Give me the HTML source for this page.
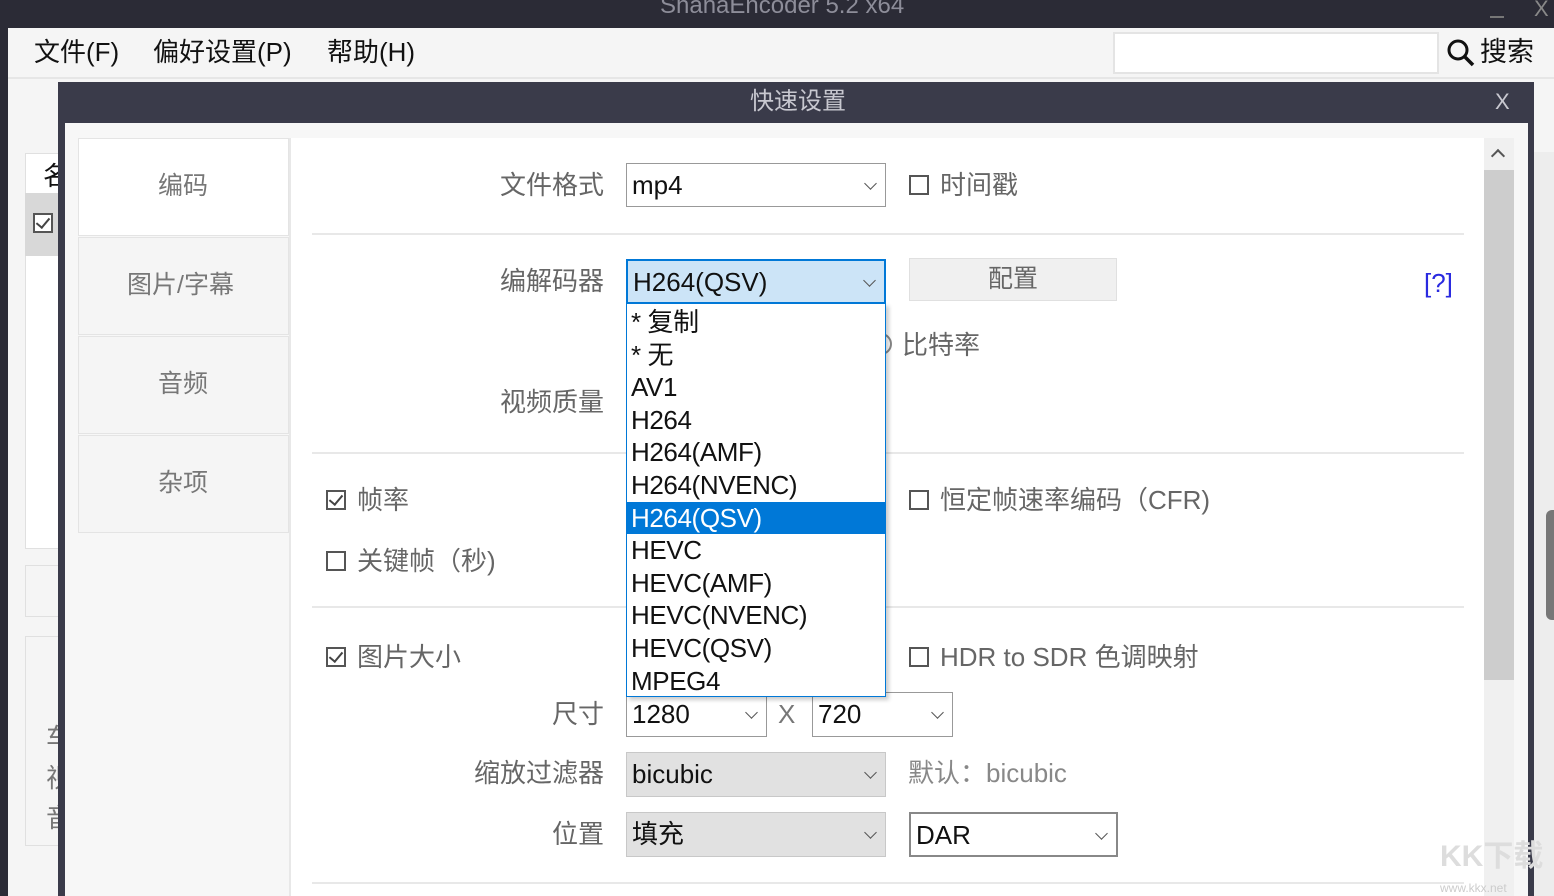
<!DOCTYPE html>
<html><head><meta charset="utf-8"><style>
*{margin:0;padding:0;box-sizing:border-box}
body{width:1554px;height:896px;overflow:hidden;position:relative;background:#2b2b36;font-family:"Liberation Sans","Noto Sans CJK SC",sans-serif}
.a{position:absolute}
.t{position:absolute;white-space:nowrap;line-height:1;font-size:26px}
.lbl{color:#666;text-align:right}
.cb{position:absolute;width:20px;height:20px;border:2px solid #555;background:#fff}
.cb.on::after{content:"";position:absolute;left:4px;top:0px;width:6px;height:11px;border:solid #444;border-width:0 2px 2px 0;transform:rotate(40deg)}
.combo{position:absolute;border:1px solid #999;background:#fff;font-size:26px;color:#111;padding-left:5px;line-height:42px}
.combo.g{background:#e1e1e1;border-color:#c8c8c8}
.chev{position:absolute;right:10px;top:15px;width:9px;height:9px;border:solid #555;border-width:0 1.5px 1.5px 0;transform:rotate(45deg)}
.sep{position:absolute;left:312px;width:1152px;height:2px;background:#e8e8e8}
.it{height:32.6px;line-height:32.6px;padding-left:4px;font-size:26px;color:#111;letter-spacing:-0.4px}
</style></head><body>
<div class="t" style="left:660px;top:-6px;color:#8d8d99;font-size:24px">ShanaEncoder 5.2 x64</div>
<div class="a" style="left:1490px;top:16px;width:14px;height:2px;background:#777"></div>
<div class="t" style="left:1534px;top:-2px;color:#888;font-size:22px">X</div>
<div class="a" style="left:8px;top:28px;width:1546px;height:868px;background:#f5f5f5"></div>
<div class="a" style="left:8px;top:77px;width:1546px;height:2px;background:#e6e6e6"></div>
<div class="t" style="left:34px;top:39px;color:#111">文件(F)</div>
<div class="t" style="left:153px;top:39px;color:#111">偏好设置(P)</div>
<div class="t" style="left:327px;top:39px;color:#111">帮助(H)</div>
<div class="a" style="left:1113px;top:32px;width:326px;height:42px;background:#fff;border:2px solid #e4e4e4"></div>
<svg class="a" style="left:1446px;top:38px" width="30" height="30"><circle cx="12" cy="12" r="9" fill="none" stroke="#111" stroke-width="3"/><line x1="19" y1="19" x2="27" y2="27" stroke="#111" stroke-width="3.5"/></svg>
<div class="t" style="left:1480px;top:39px;color:#111;font-size:27px">搜索</div>
<div class="a" style="left:25px;top:153px;width:40px;height:396px;background:#fff;border:1px solid #e0e0e0"></div>
<div class="a" style="left:25px;top:193px;width:40px;height:63px;background:#d8d8d8"></div>
<div class="t" style="left:43px;top:163px;color:#111">名</div>
<div class="cb on" style="left:33px;top:213px;background:#fff"></div>
<div class="a" style="left:25px;top:565px;width:40px;height:52px;border:1px solid #e0e0e0"></div>
<div class="a" style="left:25px;top:636px;width:40px;height:210px;border:1px solid #e0e0e0"></div>
<div class="t" style="left:46px;top:718px;color:#777;line-height:40px">车<br>视<br>音</div>
<div class="a" style="left:1534px;top:152px;width:20px;height:744px;background:#ededed"></div>
<div class="a" style="left:1546px;top:510px;width:10px;height:110px;background:#777;border-radius:6px 0 0 6px"></div>
<div class="a" style="left:58px;top:82px;width:1476px;height:814px;background:#3a3b4a"></div>
<div class="t" style="left:750px;top:90px;color:#c8c8d0;font-size:24px">快速设置</div>
<div class="t" style="left:1495px;top:91px;color:#c8c8d0;font-size:22px">X</div>
<div class="a" style="left:65px;top:123px;width:1463px;height:773px;background:#f7f7f7"></div>
<div class="a" style="left:78px;top:138px;width:211px;height:98px;background:#fff;border:1px solid #e4e4e4"></div>
<div class="a" style="left:78px;top:237px;width:211px;height:98px;background:#f5f5f5;border:1px solid #e4e4e4"></div>
<div class="a" style="left:78px;top:336px;width:211px;height:98px;background:#f5f5f5;border:1px solid #e4e4e4"></div>
<div class="a" style="left:78px;top:435px;width:211px;height:98px;background:#f5f5f5;border:1px solid #e4e4e4"></div>
<div class="t" style="left:158px;top:174px;color:#777;font-size:25px">编码</div>
<div class="t" style="left:127px;top:273px;color:#777;font-size:25px">图片/字幕</div>
<div class="t" style="left:158px;top:372px;color:#777;font-size:25px">音频</div>
<div class="t" style="left:158px;top:471px;color:#777;font-size:25px">杂项</div>
<div class="a" style="left:289px;top:138px;width:2px;height:758px;background:#e8e8e8"></div>
<div class="a" style="left:291px;top:138px;width:1193px;height:758px;background:#fff"></div>
<div class="a" style="left:1484px;top:138px;width:30px;height:758px;background:#f0f0f0"></div>
<div class="a" style="left:1484px;top:170px;width:30px;height:510px;background:#cdcdcd"></div>
<div class="a" style="left:1493px;top:151px;width:10px;height:10px;border:solid #555;border-width:2.5px 0 0 2.5px;transform:rotate(45deg)"></div>

<div class="t lbl" style="left:480px;width:124px;top:172px">文件格式</div>
<div class="combo" style="left:626px;top:163px;width:260px;height:44px">mp4<div class="chev"></div></div>
<div class="cb" style="left:909px;top:175px"></div>
<div class="t lbl" style="left:940px;top:172px;text-align:left">时间戳</div>
<div class="sep" style="top:233px"></div>

<div class="t lbl" style="left:480px;width:124px;top:268px">编解码器</div>
<div class="combo" style="left:626px;top:259px;width:260px;height:45px;background:#cce4f7;border:2px solid #0078d7">H264(QSV)<div class="chev"></div></div>
<div class="a" style="left:909px;top:258px;width:208px;height:43px;background:#f0f0f0;border:1px solid #e0e0e0"></div>
<div class="t" style="left:988px;top:267px;color:#666;font-size:25px">配置</div>
<div class="t" style="left:1424px;top:270px;color:#2a2ae0">[?]</div>
<div class="a" style="left:870px;top:333px;width:22px;height:22px;border:2px solid #888;border-radius:50%"></div>
<div class="t lbl" style="left:902px;top:332px;text-align:left">比特率</div>
<div class="t lbl" style="left:480px;width:124px;top:389px">视频质量</div>
<div class="a" style="left:870px;top:384px;width:16px;height:44px;border:1px solid #aaa"></div>
<div class="sep" style="top:452px"></div>

<div class="cb on" style="left:326px;top:490px"></div>
<div class="t lbl" style="left:357px;top:487px;text-align:left">帧率</div>
<div class="cb" style="left:909px;top:490px"></div>
<div class="t lbl" style="left:940px;top:487px;text-align:left">恒定帧速率编码（CFR)</div>
<div class="cb" style="left:326px;top:551px"></div>
<div class="t lbl" style="left:357px;top:548px;text-align:left">关键帧（秒)</div>
<div class="sep" style="top:606px"></div>

<div class="cb on" style="left:326px;top:647px"></div>
<div class="t lbl" style="left:357px;top:644px;text-align:left">图片大小</div>
<div class="cb" style="left:909px;top:647px"></div>
<div class="t lbl" style="left:940px;top:644px;text-align:left">HDR to SDR 色调映射</div>
<div class="t lbl" style="left:480px;width:124px;top:701px">尺寸</div>
<div class="combo" style="left:626px;top:692px;width:141px;height:45px">1280<div class="chev"></div></div>
<div class="t" style="left:778px;top:701px;color:#777">X</div>
<div class="combo" style="left:812px;top:692px;width:141px;height:45px">720<div class="chev"></div></div>
<div class="t lbl" style="left:440px;width:164px;top:760px">缩放过滤器</div>
<div class="combo g" style="left:626px;top:752px;width:260px;height:45px">bicubic<div class="chev"></div></div>
<div class="t lbl" style="left:908px;top:760px;text-align:left;color:#888">默认：bicubic</div>
<div class="t lbl" style="left:480px;width:124px;top:821px">位置</div>
<div class="combo g" style="left:626px;top:812px;width:260px;height:45px">填充<div class="chev"></div></div>
<div class="combo" style="left:909px;top:812px;width:209px;height:45px;border:2px solid #888">DAR<div class="chev"></div></div>
<div class="sep" style="top:882px"></div>

<div class="a" style="left:626px;top:303px;width:260px;height:394px;background:#fff;border:1px solid #0078d7;box-shadow:3px 3px 4px rgba(0,0,0,.2);padding-top:2px">
<div class="it">* 复制</div><div class="it">* 无</div><div class="it">AV1</div><div class="it">H264</div><div class="it">H264(AMF)</div><div class="it">H264(NVENC)</div>
<div class="it" style="background:#0078d7;color:#fff">H264(QSV)</div>
<div class="it">HEVC</div><div class="it">HEVC(AMF)</div><div class="it">HEVC(NVENC)</div><div class="it">HEVC(QSV)</div><div class="it">MPEG4</div>
</div>
<div class="t" style="left:1440px;top:842px;color:#ddd;font-size:30px;font-weight:bold">KK下载</div>
<div class="t" style="left:1440px;top:882px;color:#ccc;font-size:12px">www.kkx.net</div>
</body></html>
